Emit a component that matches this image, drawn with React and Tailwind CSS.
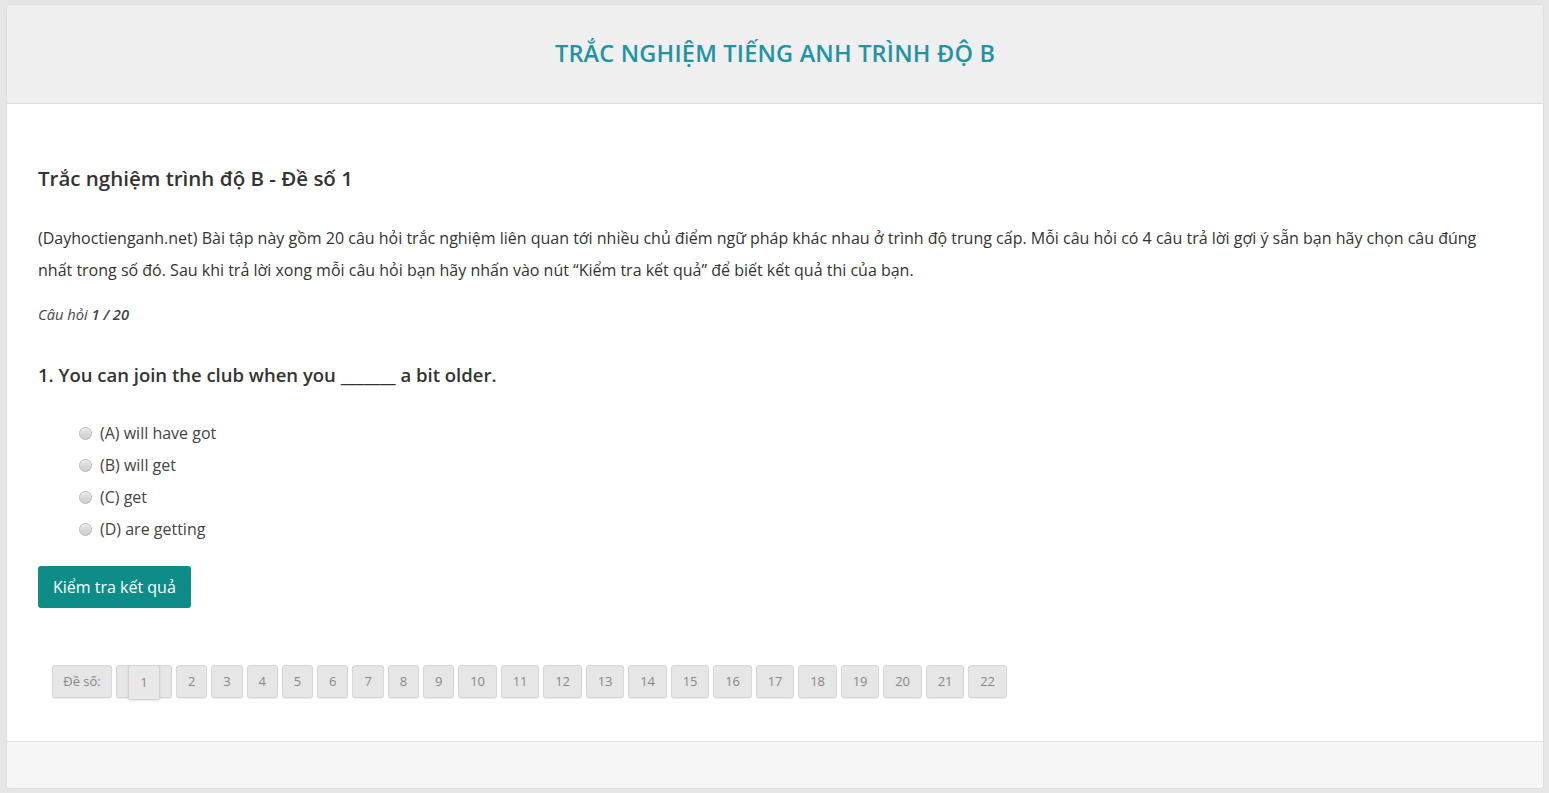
import React from "react";

const options = ["(A) will have got", "(B) will get", "(C) get", "(D) are getting"];
const pages = Array.from({ length: 21 }, (_, i) => i + 2);

export default function App() {
  return (
    <div
      className="min-h-[793px] bg-[#e6e6e6] pt-[5px] pb-[5px] pl-[7px] pr-[6px]"
      style={{ fontFamily: '"Open Sans", "Noto Sans", sans-serif' }}
    >
      <div className="rounded-[3px] bg-white shadow-[0_0_2px_rgba(0,0,0,0.12)] overflow-hidden">
        <div className="h-[99px] bg-[#efefef] border-b border-[#dcdcdc] flex items-center justify-center">
          <h1 className="text-[23.5px] font-semibold text-[#2393a4] tracking-[0.2px] leading-none">
            TRẮC NGHIỆM TIẾNG ANH TRÌNH ĐỘ B
          </h1>
        </div>

        <div className="pl-[31px] pr-[31px] pt-[60px] pb-[43px] text-[#333]">
          <h2 className="text-[20.5px] leading-[28px] font-semibold text-[#333]">
            Trắc nghiệm trình độ B - Đề số 1
          </h2>
          <p className="mt-[30px] text-[16px] leading-[32px] text-[#333]">
            (Dayhoctienganh.net) Bài tập này gồm 20 câu hỏi trắc nghiệm liên quan tới nhiều chủ điểm ngữ pháp khác nhau ở trình độ trung cấp. Mỗi câu hỏi có 4 câu trả lời gợi ý sẵn bạn hãy chọn câu đúng nhất trong số đó. Sau khi trả lời xong mỗi câu hỏi bạn hãy nhấn vào nút “Kiểm tra kết quả” để biết kết quả thi của bạn.
          </p>
          <p className="mt-[18px] text-[14.7px] leading-[20px] italic text-[#444]">
            Câu hỏi <span className="font-semibold">1 / 20</span>
          </p>
          <h3 className="mt-[39px] text-[18.5px] leading-[24px] font-semibold text-[#333]">
            1. You can join the club when you _______ a bit older.
          </h3>
          <ul className="mt-[30px] pl-[41px]">
            {options.map((o) => (
              <li key={o} className="flex items-center h-[32px] text-[16px] text-[#444]">
                <span className="w-[13px] h-[13px] rounded-full border border-[#b5b5b5] bg-gradient-to-b from-[#e4e4e4] to-[#cfcfcf] shadow-[inset_0_1px_1px_rgba(255,255,255,0.8)]" />
                <span className="ml-[8px]">{o}</span>
              </li>
            ))}
          </ul>
          <button className="mt-[21px] h-[42px] px-[15px] rounded-[3px] bg-[#0e8c88] text-white text-[16px]">
            Kiểm tra kết quả
          </button>

          <div className="mt-[57px] ml-[14px] flex items-center gap-[4px] text-[13px] text-[#888]">
            <span className="h-[33px] w-[60px] flex items-center justify-center rounded-[3px] border border-[#d6d6d6] bg-[#e6e6e6] shadow-[0_1px_1px_rgba(0,0,0,0.08)]">
              Đề số:
            </span>
            <span className="h-[33px] w-[56px] flex items-center justify-center rounded-[3px] border border-[#d6d6d6] bg-[#e6e6e6] shadow-[0_1px_1px_rgba(0,0,0,0.08)]">
              <span className="h-[35px] w-[32px] -mb-[2px] flex items-center justify-center rounded-[2px] border border-[#d3d3d3] bg-[#e8e8e8] shadow-[0_1px_2px_rgba(0,0,0,0.1)]">
                1
              </span>
            </span>
            {pages.map((p) => (
              <span
                key={p}
                className={
                  (p < 10 ? "w-[31.3px]" : "w-[38.5px]") +
                  " h-[33px] flex items-center justify-center rounded-[3px] border border-[#d6d6d6] bg-[#e6e6e6] shadow-[0_1px_1px_rgba(0,0,0,0.08)]"
                }
              >
                {p}
              </span>
            ))}
          </div>
        </div>

        <div className="h-[47px] bg-[#f6f6f6] border-t border-[#e4e4e4]" />
      </div>
    </div>
  );
}
